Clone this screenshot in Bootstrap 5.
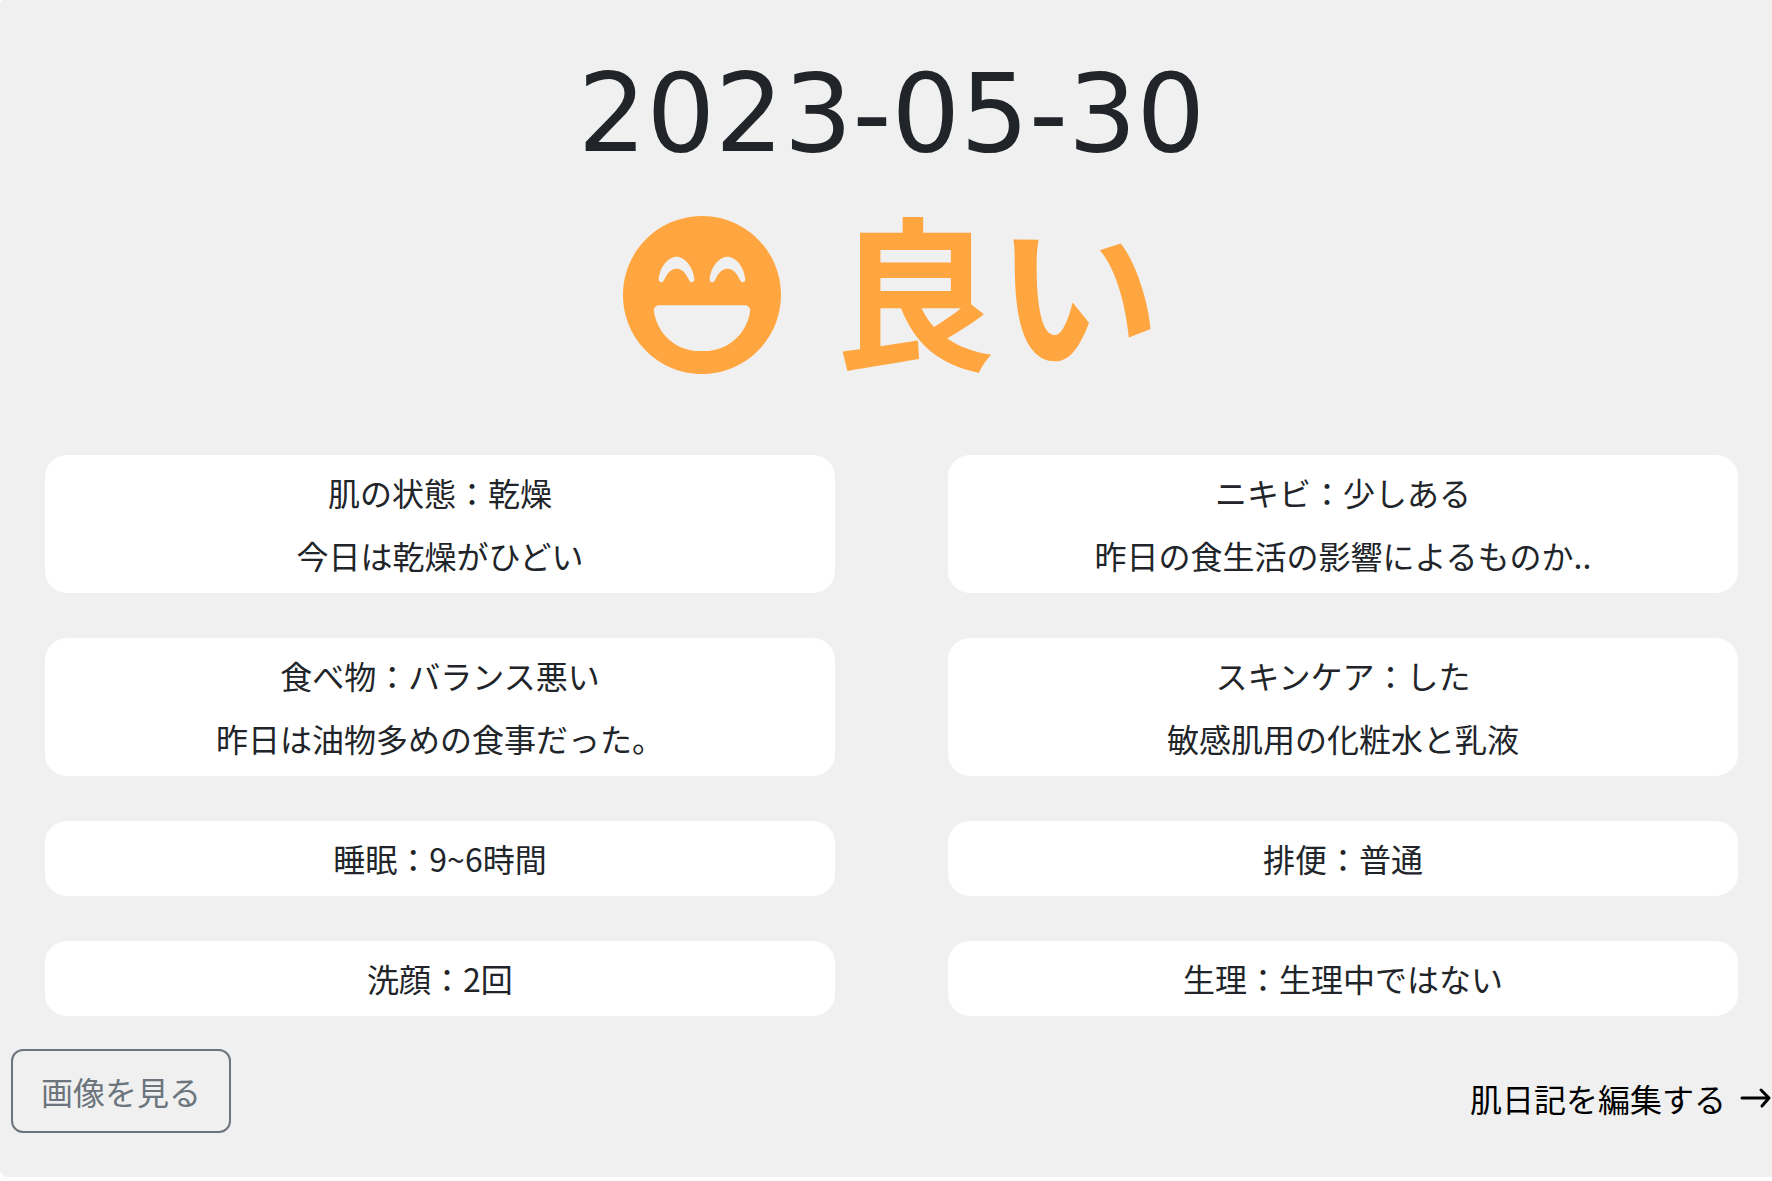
<!DOCTYPE html>
<html lang="ja">
<head>
<meta charset="utf-8">
<meta name="viewport" content="width=device-width, initial-scale=1">
<title>肌日記 2023-05-30</title>
<link href="https://cdn.jsdelivr.net/npm/bootstrap@5.3.0/dist/css/bootstrap.min.css" rel="stylesheet">
<style>
  body { font-family: "Noto Sans CJK JP", sans-serif; font-size: 32px; line-height: 49px; color: #212529; background: #fff; }
  .diary { background: #f0f0f0; border-radius: 4px 0 0 8px; padding: 50px 0 44px; }
  .diary-head, .entries { padding: 0 34px 0 45px; }
  .diary-date { font-family: "DejaVu Sans", sans-serif; font-size: 108px; line-height: 128px; font-weight: 400; margin: 0; }
  .mood { color: #ffa640; font-size: 164px; line-height: 140px; font-weight: 700; gap: 51px; margin: 38px 0 81px; }
  .mood svg { width: 158px; height: 158px; }
  .entries { grid-template-columns: 1fr; gap: 45px; }
  .entry { border-radius: 22px; padding: 13px; gap: 14px; }
  .actions { padding: 33px 0 0 11px; }
  .btn-photo { --bs-btn-font-size: 32px; --bs-btn-line-height: 48px; --bs-btn-padding-x: 28px; --bs-btn-padding-y: 16px; --bs-btn-border-width: 2px; --bs-btn-border-radius: 12px; font-family: inherit; }
  .edit-link { color: #000; padding-top: 14px; }
  .edit-link svg { width: 32px; height: 24px; margin-left: 14px; }
  @media (min-width: 768px) { .entries { grid-template-columns: 1fr 1fr; column-gap: 113px; } }
</style>
</head>
<body>
<main class="diary">
  <header class="diary-head">
    <h1 class="diary-date text-center">2023-05-30</h1>
    <div class="mood d-flex justify-content-center align-items-start">
      <svg viewBox="0 8 496 496" fill="currentColor" aria-hidden="true"><path d="M248 8C111 8 0 119 0 256s111 248 248 248 248-111 248-248S385 8 248 8zm24 199.400c3.300-42.100 32.200-71.400 56-71.400s52.700 29.300 56 71.400c.7 8.600-10.800 11.900-14.900 4.500l-9.500-17c-7.700-13.700-19.200-21.600-31.500-21.600s-23.800 7.900-31.500 21.600l-9.500 17c-4.200 7.400-15.800 4.100-15.100-4.500zm-160 0c3.300-42.100 32.200-71.400 56-71.400s52.700 29.300 56 71.400c.7 8.600-10.800 11.900-14.900 4.500l-9.500-17c-7.700-13.700-19.200-21.600-31.500-21.600s-23.800 7.900-31.500 21.600l-9.500 17c-4.300 7.400-15.800 4-15.100-4.500zM398.900 306C390 377 329.400 432 256 432h-16c-73.400 0-134-55-142.900-126-1.200-9.500 6.300-18 15.900-18h270c9.600 0 17.100 8.400 15.900 18z"/></svg>
      <span>良い</span>
    </div>
  </header>
  <section class="entries d-grid text-center">
    <div class="entry bg-white d-flex flex-column"><div>肌の状態：乾燥</div><div>今日は乾燥がひどい</div></div>
    <div class="entry bg-white d-flex flex-column"><div>ニキビ：少しある</div><div>昨日の食生活の影響によるものか..</div></div>
    <div class="entry bg-white d-flex flex-column"><div>食べ物：バランス悪い</div><div>昨日は油物多めの食事だった。</div></div>
    <div class="entry bg-white d-flex flex-column"><div>スキンケア：した</div><div>敏感肌用の化粧水と乳液</div></div>
    <div class="entry bg-white">睡眠：9~6時間</div>
    <div class="entry bg-white">排便：普通</div>
    <div class="entry bg-white">洗顔：2回</div>
    <div class="entry bg-white">生理：生理中ではない</div>
  </section>
  <div class="actions d-flex justify-content-between align-items-center">
    <button type="button" class="btn btn-outline-secondary btn-photo">画像を見る</button>
    <a href="#" class="edit-link d-flex align-items-center text-decoration-none">肌日記を編集する<svg viewBox="0 0 32 24" fill="none" stroke="currentColor" stroke-width="3" stroke-linecap="round" stroke-linejoin="round" aria-hidden="true"><path d="M2 12H29M21 4L29 12L22 20"/></svg></a>
  </div>
</main>
<script src="https://cdn.jsdelivr.net/npm/bootstrap@5.3.0/dist/js/bootstrap.bundle.min.js"></script>
</body>
</html>
